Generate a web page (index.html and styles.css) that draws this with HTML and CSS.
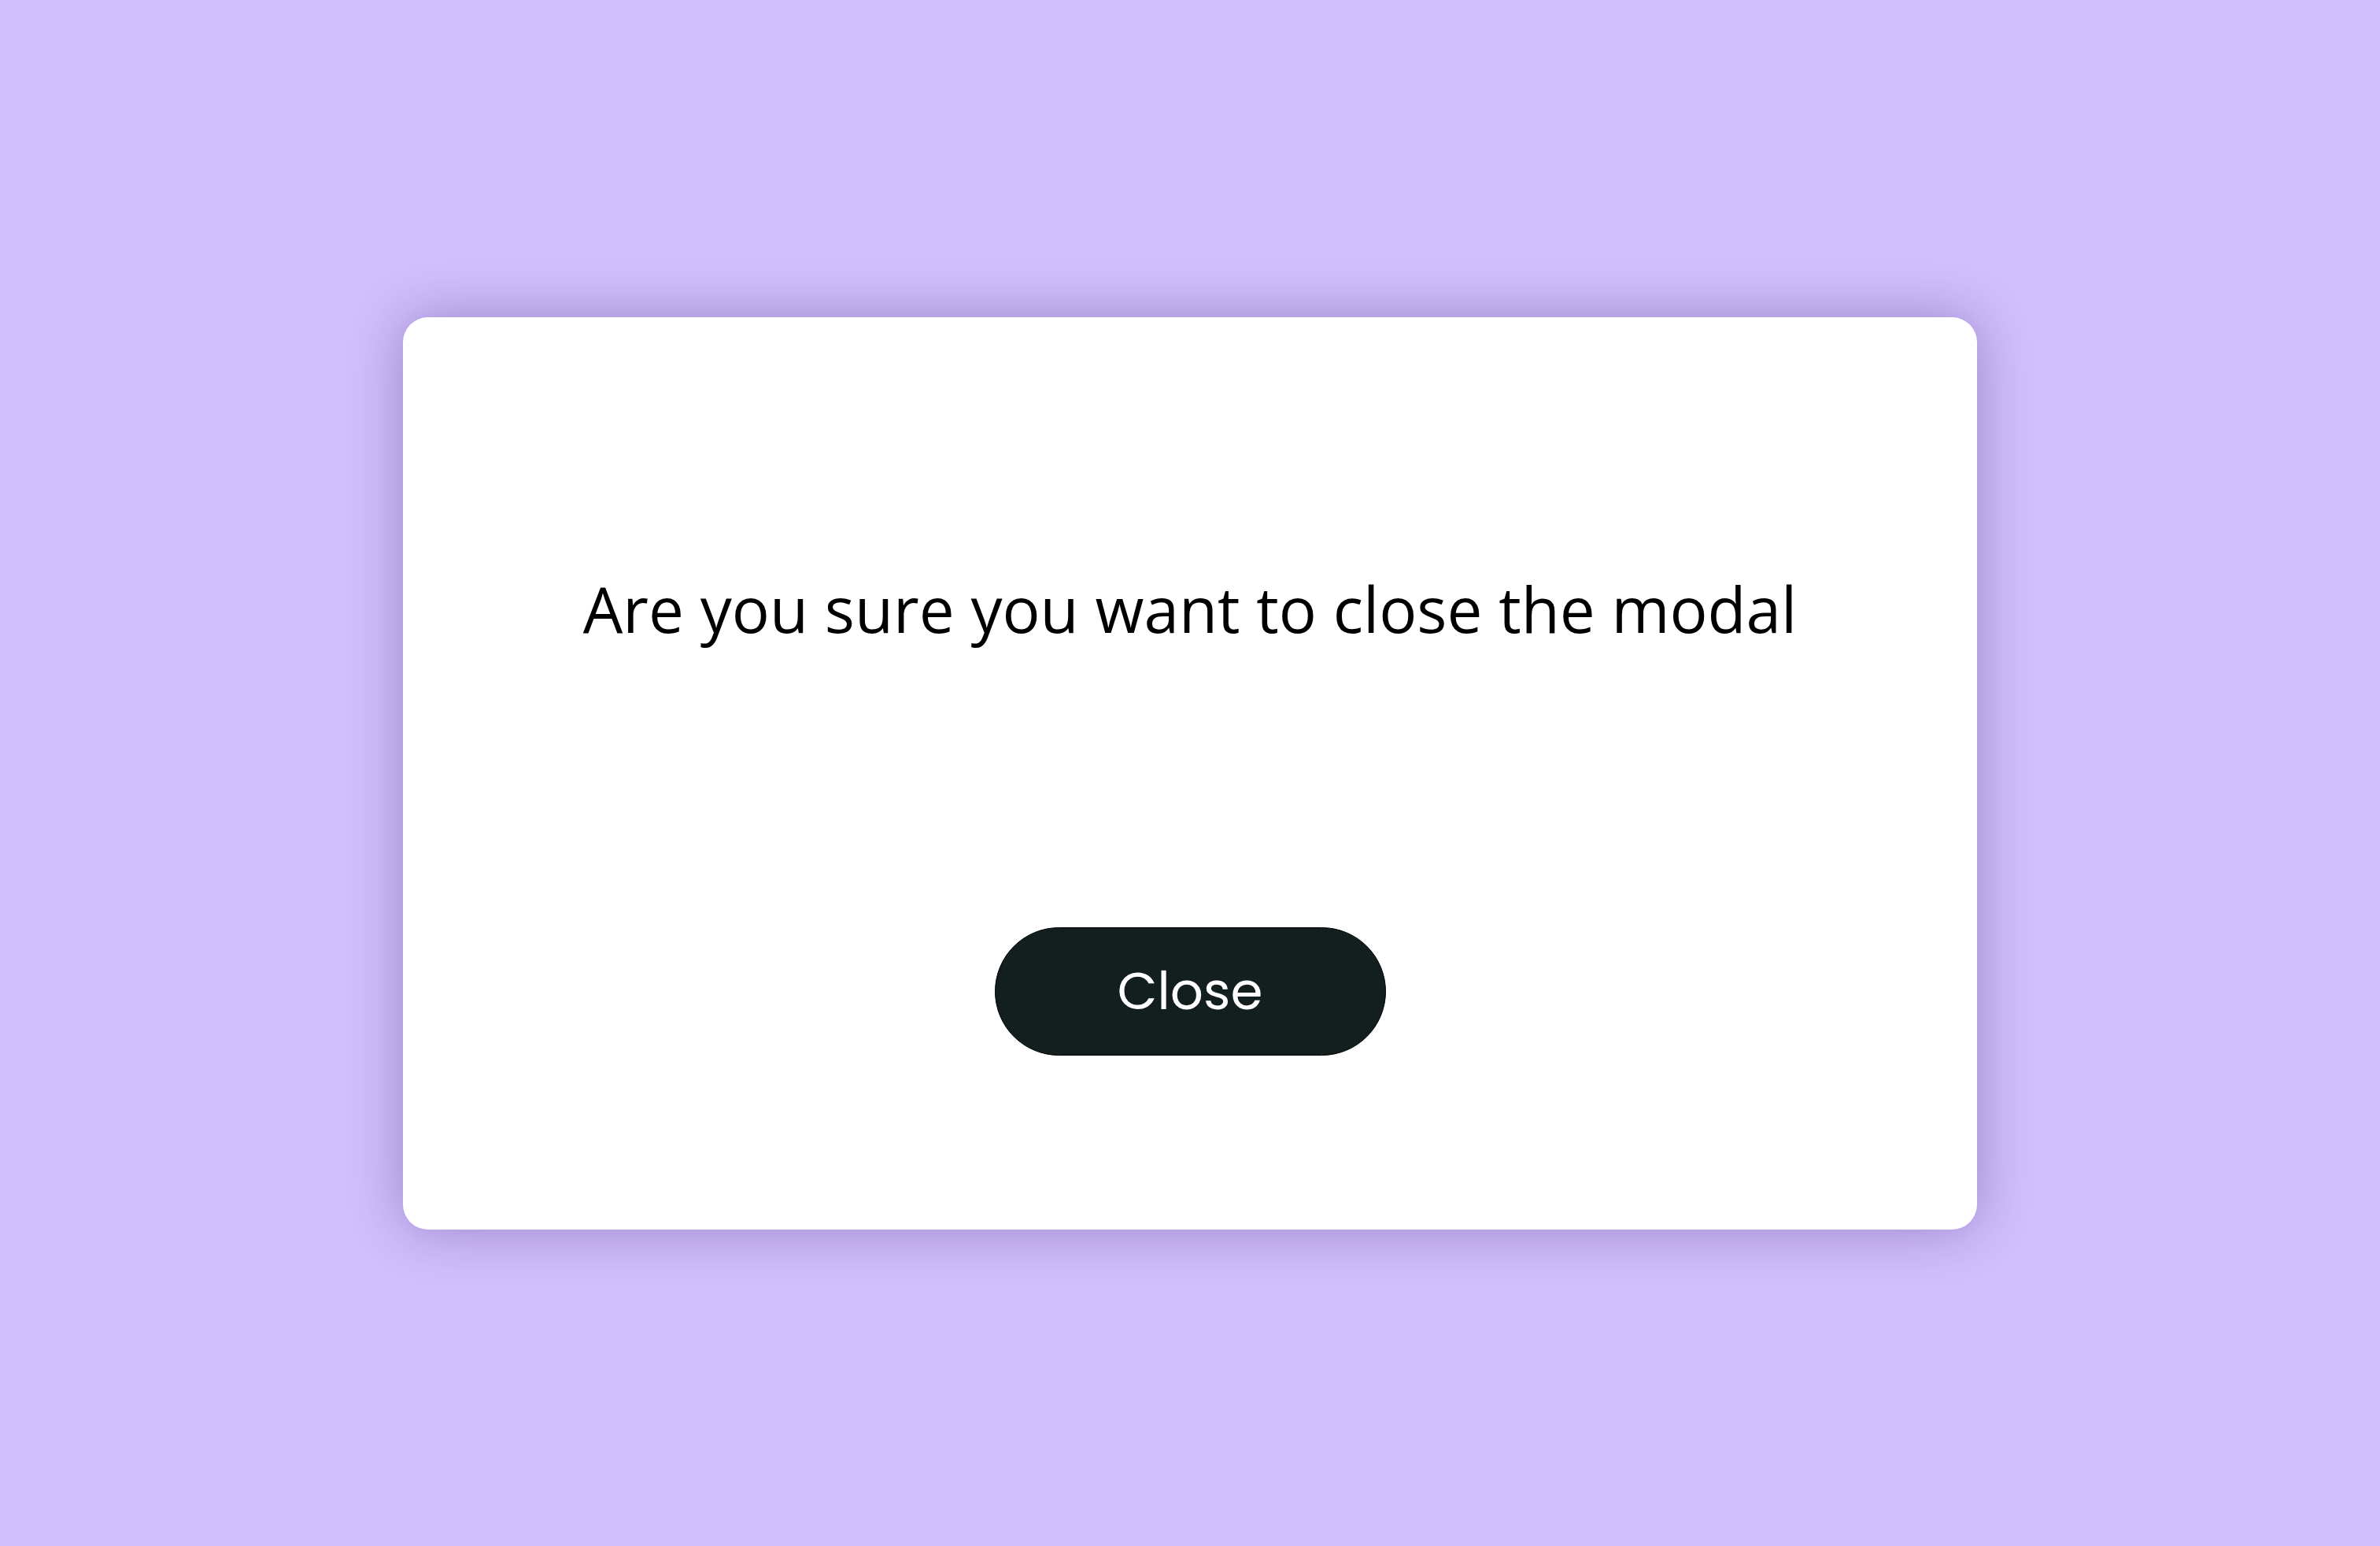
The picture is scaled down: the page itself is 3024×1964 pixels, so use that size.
FILE: index.html
```html
<!DOCTYPE html>
<html lang="en">
<head>
<meta charset="utf-8">
<title>Modal</title>
<link rel="stylesheet" href="styles.css">
</head>
<body>
<div class="overlay">
  <div class="modal" role="dialog">
    <p class="modal-text">Are you sure you want to close the modal</p>
    <button class="close-btn" type="button">Close</button>
  </div>
</div>
</body>
</html>
```

FILE: styles.css
```css
html, body {
  margin: 0;
  padding: 0;
}

body {
  background: #d1befe;
  font-family: "Open Sans", "Noto Sans", sans-serif;
}

.overlay {
  min-height: 100vh;
  display: flex;
  align-items: center;
  justify-content: center;
}

.modal {
  width: 2000px;
  box-sizing: border-box;
  background: #ffffff;
  border-radius: 32px;
  box-shadow: 0 0 70px rgba(40, 20, 80, 0.32);
  padding: 315px 0 221px;
  display: flex;
  flex-direction: column;
  align-items: center;
  gap: 351px;
}

.modal-text {
  margin: 0;
  font-family: "Open Sans", sans-serif;
  font-size: 80px;
  line-height: 109px;
  color: #000000;
}

.close-btn {
  width: 497px;
  height: 163px;
  box-sizing: border-box;
  background: #131f1f;
  border: 1.5px solid #000000;
  border-radius: 999px;
  color: #ffffff;
  font-family: "Poppins", "Lato", sans-serif;
  font-size: 66px;
  display: flex;
  align-items: center;
  justify-content: center;
  padding: 0;
  cursor: pointer;
}
```
